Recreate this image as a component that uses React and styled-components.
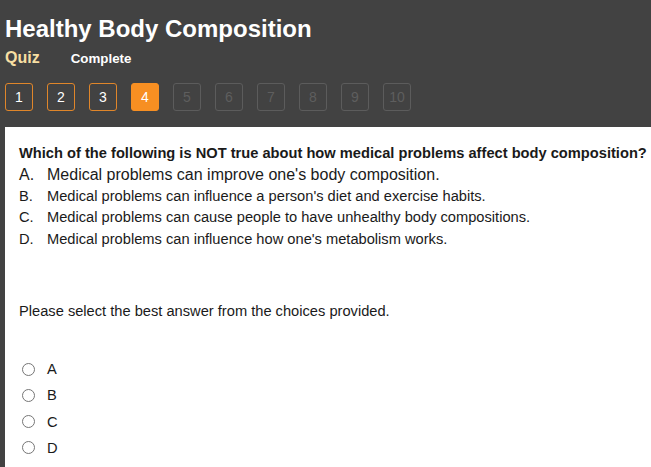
import React from "react";
import styled, { createGlobalStyle } from "styled-components";

const Global = createGlobalStyle`
  html, body { margin: 0; padding: 0; background: #424242; }
  body { font-family: "Liberation Sans", Arial, sans-serif; }
`;

const Page = styled.div`
  width: 651px;
  height: 467px;
  background: #424242;
  display: flex;
  flex-direction: column;
  overflow: hidden;
`;

const Header = styled.header`
  padding: 15px 5px 0 5px;
`;

const Title = styled.h1`
  margin: 0;
  font-size: 24px;
  line-height: 28px;
  font-weight: bold;
  color: #ffffff;
`;

const SubRow = styled.div`
  display: flex;
  align-items: baseline;
  margin-top: 5px;
  height: 20px;
  line-height: 20px;
  gap: 31px;
`;

const QuizLabel = styled.span`
  font-size: 16px;
  font-weight: bold;
  color: #f7dfa3;
`;

const Status = styled.span`
  font-size: 13.33px;
  font-weight: bold;
  color: #ffffff;
`;

const Steps = styled.div`
  display: flex;
  gap: 14px;
  margin-top: 15px;
`;

const Step = styled.div`
  width: 28px;
  height: 28px;
  box-sizing: border-box;
  border-radius: 3px;
  border: 1px solid ${(p) => (p.$state === "active" ? "#f78f22" : p.$state === "done" ? "#e0862a" : "#5c5c5c")};
  background: ${(p) => (p.$state === "active" ? "#f78f22" : "transparent")};
  color: ${(p) => (p.$state === "disabled" ? "#5e5e5e" : "#ffffff")};
  font-size: 14px;
  display: flex;
  align-items: center;
  justify-content: center;
`;

const Panel = styled.main`
  flex: 1;
  margin-left: 5px;
  margin-top: 16px;
  background: #ffffff;
  padding: 17px 0 0 14px;
  color: #1a1a1a;
`;

const Question = styled.div`
  font-size: 14.67px;
  font-weight: bold;
  line-height: 18px;
  white-space: nowrap;
`;

const Options = styled.ol`
  list-style: none;
  margin: 2px 0 0 0;
  padding: 0;
`;

const Option = styled.li`
  display: flex;
  font-size: ${(p) => (p.$big ? "16px" : "14.67px")};
  line-height: 21.5px;
  white-space: nowrap;
`;

const Letter = styled.span`
  width: 28px;
  flex: none;
`;

const Instruction = styled.p`
  margin: 52px 0 0 0;
  font-size: 14.67px;
  line-height: 18px;
`;

const Choices = styled.div`
  margin-top: 40px;
  display: flex;
  flex-direction: column;
  gap: 8.3px;
`;

const Choice = styled.label`
  display: flex;
  align-items: center;
  gap: 12px;
  font-size: 14.67px;
  height: 18px;
  padding-left: 3px;
`;

const Radio = styled.span`
  width: 13px;
  height: 13px;
  border: 1px solid #767676;
  border-radius: 50%;
  box-sizing: border-box;
  background: #fff;
`;

const steps = [1, 2, 3, 4, 5, 6, 7, 8, 9, 10];

export default function App() {
  return (
    <>
      <Global />
      <Page>
        <Header>
          <Title>Healthy Body Composition</Title>
          <SubRow>
            <QuizLabel>Quiz</QuizLabel>
            <Status>Complete</Status>
          </SubRow>
          <Steps>
            {steps.map((n) => (
              <Step key={n} $state={n < 4 ? "done" : n === 4 ? "active" : "disabled"}>
                {n}
              </Step>
            ))}
          </Steps>
        </Header>
        <Panel>
          <Question>Which of the following is NOT true about how medical problems affect body composition?</Question>
          <Options>
            <Option $big>
              <Letter>A.</Letter>Medical problems can improve one's body composition.
            </Option>
            <Option>
              <Letter>B.</Letter>Medical problems can influence a person's diet and exercise habits.
            </Option>
            <Option>
              <Letter>C.</Letter>Medical problems can cause people to have unhealthy body compositions.
            </Option>
            <Option>
              <Letter>D.</Letter>Medical problems can influence how one's metabolism works.
            </Option>
          </Options>
          <Instruction>Please select the best answer from the choices provided.</Instruction>
          <Choices>
            {["A", "B", "C", "D"].map((l) => (
              <Choice key={l}>
                <Radio />
                {l}
              </Choice>
            ))}
          </Choices>
        </Panel>
      </Page>
    </>
  );
}
